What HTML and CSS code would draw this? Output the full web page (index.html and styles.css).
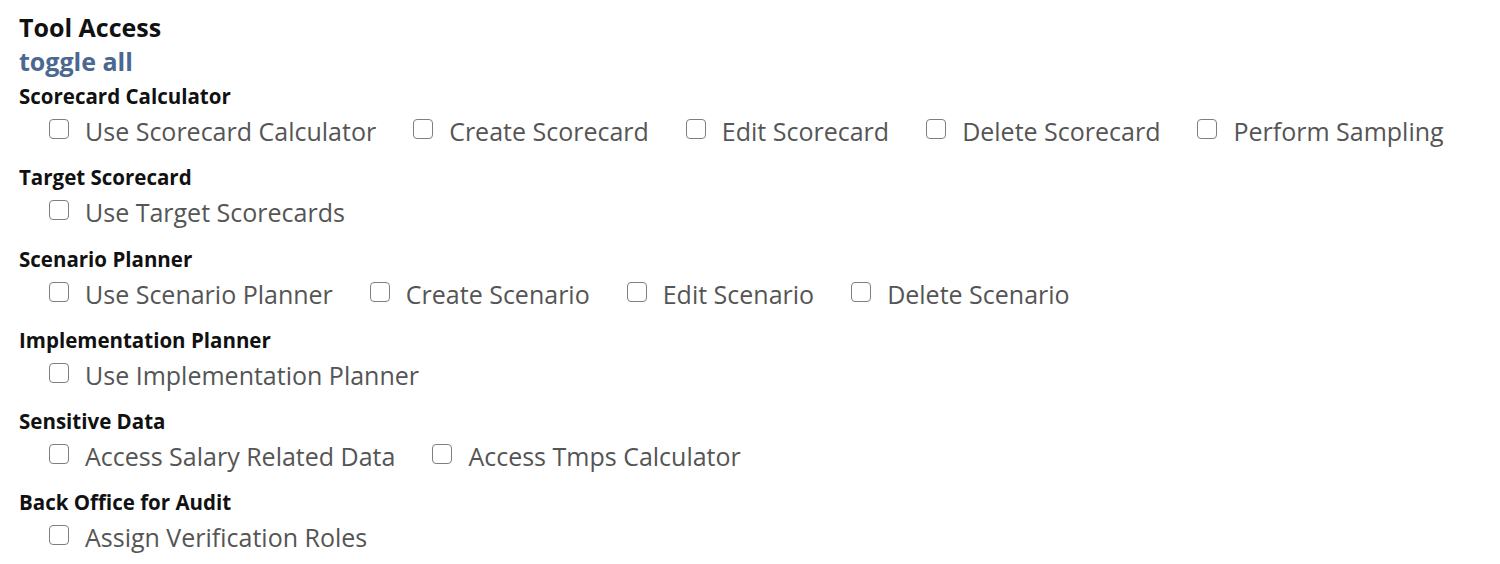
FILE: index.html
```html
<!DOCTYPE html>
<html>
<head>
  <meta charset="UTF-8">
  <title>Tool Access</title>
  <link rel="stylesheet" href="styles.css">
</head>
<body>
  <div class="access">
    <h2 class="access-title">Tool Access</h2>
    <a class="toggle-all" href="#">toggle all</a>

    <div class="group">
      <div class="group-name">Scorecard Calculator</div>
      <div class="options">
        <label class="option"><input type="checkbox"><span class="box"></span>Use Scorecard Calculator</label>
        <label class="option"><input type="checkbox"><span class="box"></span>Create Scorecard</label>
        <label class="option"><input type="checkbox"><span class="box"></span>Edit Scorecard</label>
        <label class="option"><input type="checkbox"><span class="box"></span>Delete Scorecard</label>
        <label class="option"><input type="checkbox"><span class="box"></span>Perform Sampling</label>
      </div>
    </div>

    <div class="group">
      <div class="group-name">Target Scorecard</div>
      <div class="options">
        <label class="option"><input type="checkbox"><span class="box"></span>Use Target Scorecards</label>
      </div>
    </div>

    <div class="group">
      <div class="group-name">Scenario Planner</div>
      <div class="options">
        <label class="option"><input type="checkbox"><span class="box"></span>Use Scenario Planner</label>
        <label class="option"><input type="checkbox"><span class="box"></span>Create Scenario</label>
        <label class="option"><input type="checkbox"><span class="box"></span>Edit Scenario</label>
        <label class="option"><input type="checkbox"><span class="box"></span>Delete Scenario</label>
      </div>
    </div>

    <div class="group">
      <div class="group-name">Implementation Planner</div>
      <div class="options">
        <label class="option"><input type="checkbox"><span class="box"></span>Use Implementation Planner</label>
      </div>
    </div>

    <div class="group">
      <div class="group-name">Sensitive Data</div>
      <div class="options">
        <label class="option"><input type="checkbox"><span class="box"></span>Access Salary Related Data</label>
        <label class="option"><input type="checkbox"><span class="box"></span>Access Tmps Calculator</label>
      </div>
    </div>

    <div class="group">
      <div class="group-name">Back Office for Audit</div>
      <div class="options">
        <label class="option"><input type="checkbox"><span class="box"></span>Assign Verification Roles</label>
      </div>
    </div>
  </div>
</body>
</html>
```

FILE: styles.css
```css
body {
  margin: 0;
  background: #ffffff;
  font-family: "Open Sans", Arial, sans-serif;
  color: #111111;
}

.access {
  padding: 10px 0 0 19px;
}

.access-title {
  margin: 0;
  font-size: 25px;
  font-weight: 700;
  line-height: 34px;
}

.toggle-all {
  display: block;
  color: #4a6890;
  font-size: 25px;
  font-weight: 700;
  line-height: 34px;
  text-decoration: none;
}

.group {
  padding-top: 1px;
  margin-bottom: 10.3px;
}

.group-name {
  font-size: 20.5px;
  font-weight: 700;
  line-height: 34px;
}

.options {
  display: flex;
  padding-left: 30px;
  height: 36px;
  align-items: center;
}

.option {
  display: flex;
  align-items: center;
  margin-right: 37px;
  color: #555555;
  font-size: 25px;
  cursor: pointer;
}

.option input {
  display: none;
}

.box {
  width: 18px;
  height: 18px;
  border: 1.5px solid #7f7f7f;
  border-radius: 4px;
  margin: 0 16px 4px 0;
}
```
